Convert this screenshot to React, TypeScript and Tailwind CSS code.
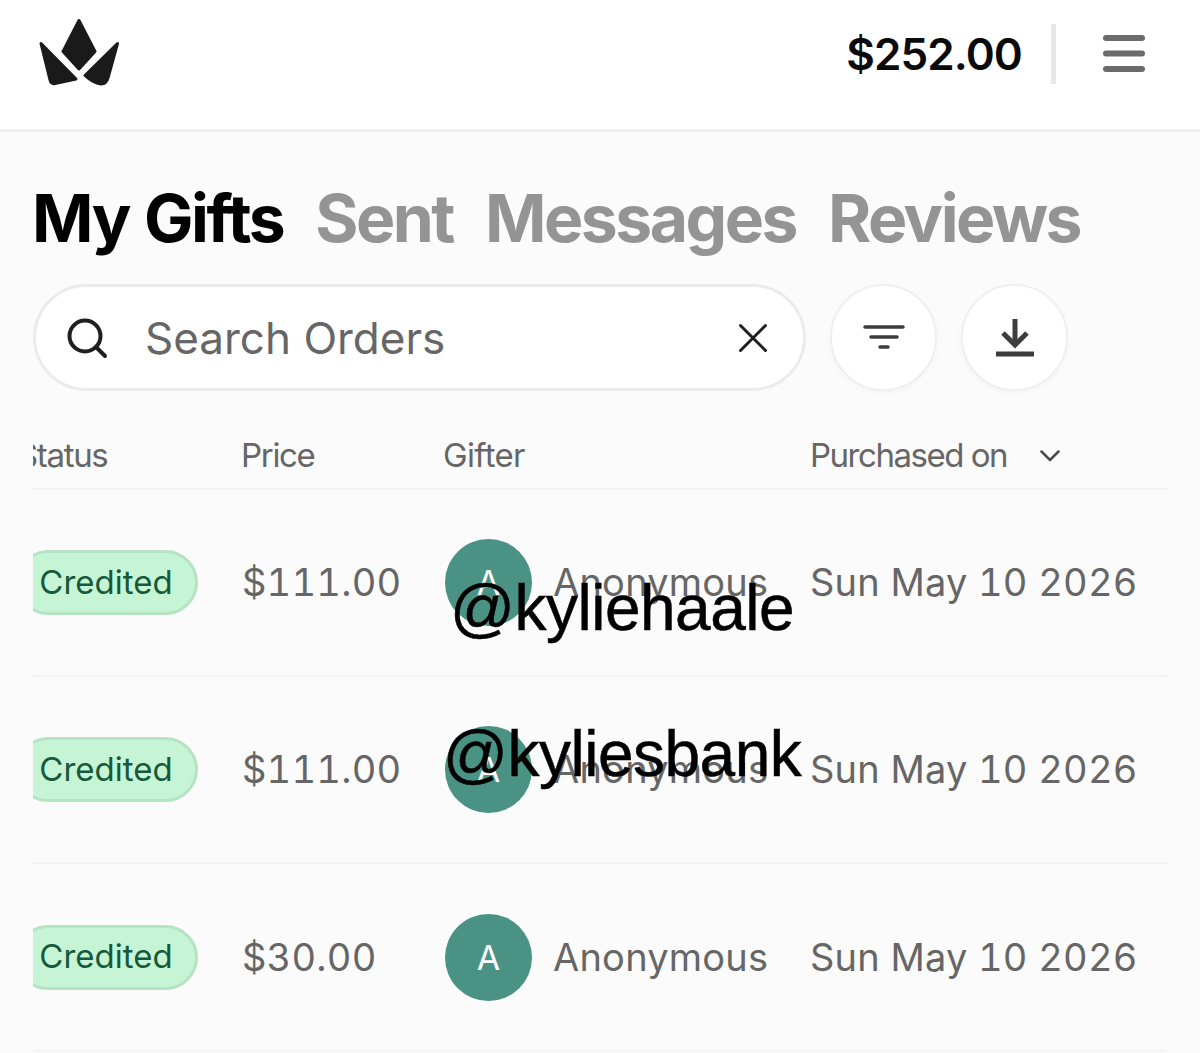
const ROWS = [
  { price: "$111.00", tag: "@kyliehaale", tagClass: "left-[450px] top-[571px]" },
  { price: "$111.00", tag: "@kyliesbank", tagClass: "left-[443px] top-[717px]" },
  { price: "$30.00" },
];

function CrownLogo() {
  return (
    <svg width="82" height="68" viewBox="0 0 82 68" className="block">
      <g fill="#1a1a1a" stroke="#1a1a1a" strokeWidth="3" strokeLinejoin="round">
        <path d="M40 1.500 L56 32.500 L40 50 L24 32.500 Z" />
        <path d="M2 24.500 L37 60 L16 64.500 Q12 65.500 11 61 Z" />
        <path d="M78.500 24.500 L69 59 Q67.500 65 62 65 Q54 64 46 56.500 Z" />
      </g>
    </svg>
  );
}

function MenuIcon() {
  return (
    <svg width="42" height="38" viewBox="0 0 42 38" className="block">
      <g stroke="#6b6b6b" strokeWidth="6" strokeLinecap="round">
        <path d="M3 3 H39" />
        <path d="M3 18.500 H39" />
        <path d="M3 34 H39" />
      </g>
    </svg>
  );
}

function SearchIcon() {
  return (
    <svg width="42" height="42" viewBox="0 0 42 42" fill="none" className="block">
      <circle cx="19" cy="19" r="15.5" stroke="#1f1f1f" strokeWidth="4" />
      <path d="M30 30 L39 39" stroke="#1f1f1f" strokeWidth="4" strokeLinecap="round" />
    </svg>
  );
}

function ClearIcon() {
  return (
    <svg width="30" height="30" viewBox="0 0 30 30" fill="none" className="block">
      <path d="M2.500 2.500 L27.500 27.500 M27.500 2.500 L2.500 27.500" stroke="#1f1f1f" strokeWidth="3" strokeLinecap="round" />
    </svg>
  );
}

function FilterIcon() {
  return (
    <svg width="42" height="26" viewBox="0 0 42 26" fill="none" className="block">
      <g stroke="#3d3d3d" strokeWidth="3.500" strokeLinecap="round">
        <path d="M2 2 H40" />
        <path d="M8 12 H34" />
        <path d="M17 22 H25" />
      </g>
    </svg>
  );
}

function DownloadIcon() {
  return (
    <svg width="38" height="38" viewBox="0 0 38 38" fill="none" className="block">
      <path d="M19 0 V26" stroke="#3d3d3d" strokeWidth="5" />
      <path d="M7 14 L19 26 L31 14" stroke="#3d3d3d" strokeWidth="5" />
      <path d="M0 35 H38" stroke="#3d3d3d" strokeWidth="5" />
    </svg>
  );
}

function Chevron() {
  return (
    <svg width="20" height="12" viewBox="0 0 20 12" fill="none" className="block">
      <path d="M1.500 1.500 L10 10 L18.500 1.500" stroke="#4a4a4a" strokeWidth="2.500" strokeLinecap="round" strokeLinejoin="round" />
    </svg>
  );
}

export default function App() {
  return (
    <div className="relative h-[1053px] w-[1200px] overflow-hidden bg-[#fbfbfb] font-['Inter',sans-serif]">
      <header className="flex h-[132px] items-center justify-between border-b-[3px] border-[#efefef] bg-white pb-[22px] pl-[39px] pr-[55px]">
        <div className="mb-[2px]">
          <CrownLogo />
        </div>
        <div className="flex items-center">
          <span className="text-[44px] font-semibold leading-none tracking-[-0.02em] text-[#0a0a0a]">$252.00</span>
          <div className="ml-[29px] mr-[47px] h-[60px] w-[5px] bg-[#e8e8e8]" />
          <MenuIcon />
        </div>
      </header>

      <nav className="mt-[50px] flex gap-[32px] pl-[32px] text-[66px] font-bold leading-[72px] tracking-[-0.038em] text-[#949494]">
        <span className="text-black [word-spacing:2px]">My Gifts</span>
        <span>Sent</span>
        <span>Messages</span>
        <span>Reviews</span>
      </nav>

      <div className="mt-[30px] flex items-center gap-[24px] pl-[33px]">
        <div className="flex h-[107px] w-[773px] items-center rounded-full border-[3px] border-[#ebebeb] bg-white pl-[30px] pr-[35px]">
          <SearchIcon />
          <span className="ml-[37px] flex-1 text-[44px] leading-none text-[#666666]">Search Orders</span>
          <ClearIcon />
        </div>
        <button type="button" className="flex h-[107px] w-[107px] items-center justify-center rounded-full border-2 border-[#efefef] bg-white shadow-[0_2px_6px_rgba(0,0,0,0.03)]">
          <FilterIcon />
        </button>
        <button type="button" className="flex h-[107px] w-[107px] items-center justify-center rounded-full border-2 border-[#efefef] bg-white shadow-[0_2px_6px_rgba(0,0,0,0.03)]">
          <DownloadIcon />
        </button>
      </div>

      <div className="mx-[33px] mt-[29px] overflow-hidden">
        <div className="grid h-[70px] grid-cols-[209px_202px_367px_1fr] items-center border-b-2 border-[#f3f3f3] pt-[4px] text-[33px] tracking-[-0.04em] text-[#666666]">
          <span className="-ml-[16px]">Status</span>
          <span className="-ml-px">Price</span>
          <span className="-ml-px tracking-[-0.02em]">Gifter</span>
          <span className="-ml-px flex items-center gap-[33px] tracking-[-0.045em]">
            Purchased on
            <Chevron />
          </span>
        </div>
        {ROWS.map((row, i) => (
          <div key={i} className="grid h-[187px] grid-cols-[209px_202px_367px_1fr] items-center border-b-2 border-[#f3f3f3] text-[38px] tracking-[0.006em] text-[#666666] tabular-nums last:h-[188px]">
            <span className="-ml-[17px] flex h-[65px] w-[182px] items-center justify-center rounded-full border-[3px] border-[#b5e3c4] bg-[#c6f5d6] pr-[2px] text-[33px] tracking-normal text-[#17593a]">
              Credited
            </span>
            <span>{row.price}</span>
            <div className="ml-px flex items-center gap-[21px]">
              <span className="flex h-[87px] w-[87px] items-center justify-center rounded-full bg-[#4a9384] text-[34px] tracking-normal text-white">A</span>
              <span>Anonymous</span>
            </div>
            <span className="-ml-px">Sun May 10 2026</span>
          </div>
        ))}
      </div>

      {ROWS.map((row) =>
        row.tag ? (
          <span key={row.tag} className={`absolute font-['Liberation_Sans',sans-serif] text-[64px] leading-[74px] tracking-[-0.5px] text-black [-webkit-text-stroke:0.5px_black] ${row.tagClass}`}>
            {row.tag}
          </span>
        ) : null,
      )}
    </div>
  );
}
